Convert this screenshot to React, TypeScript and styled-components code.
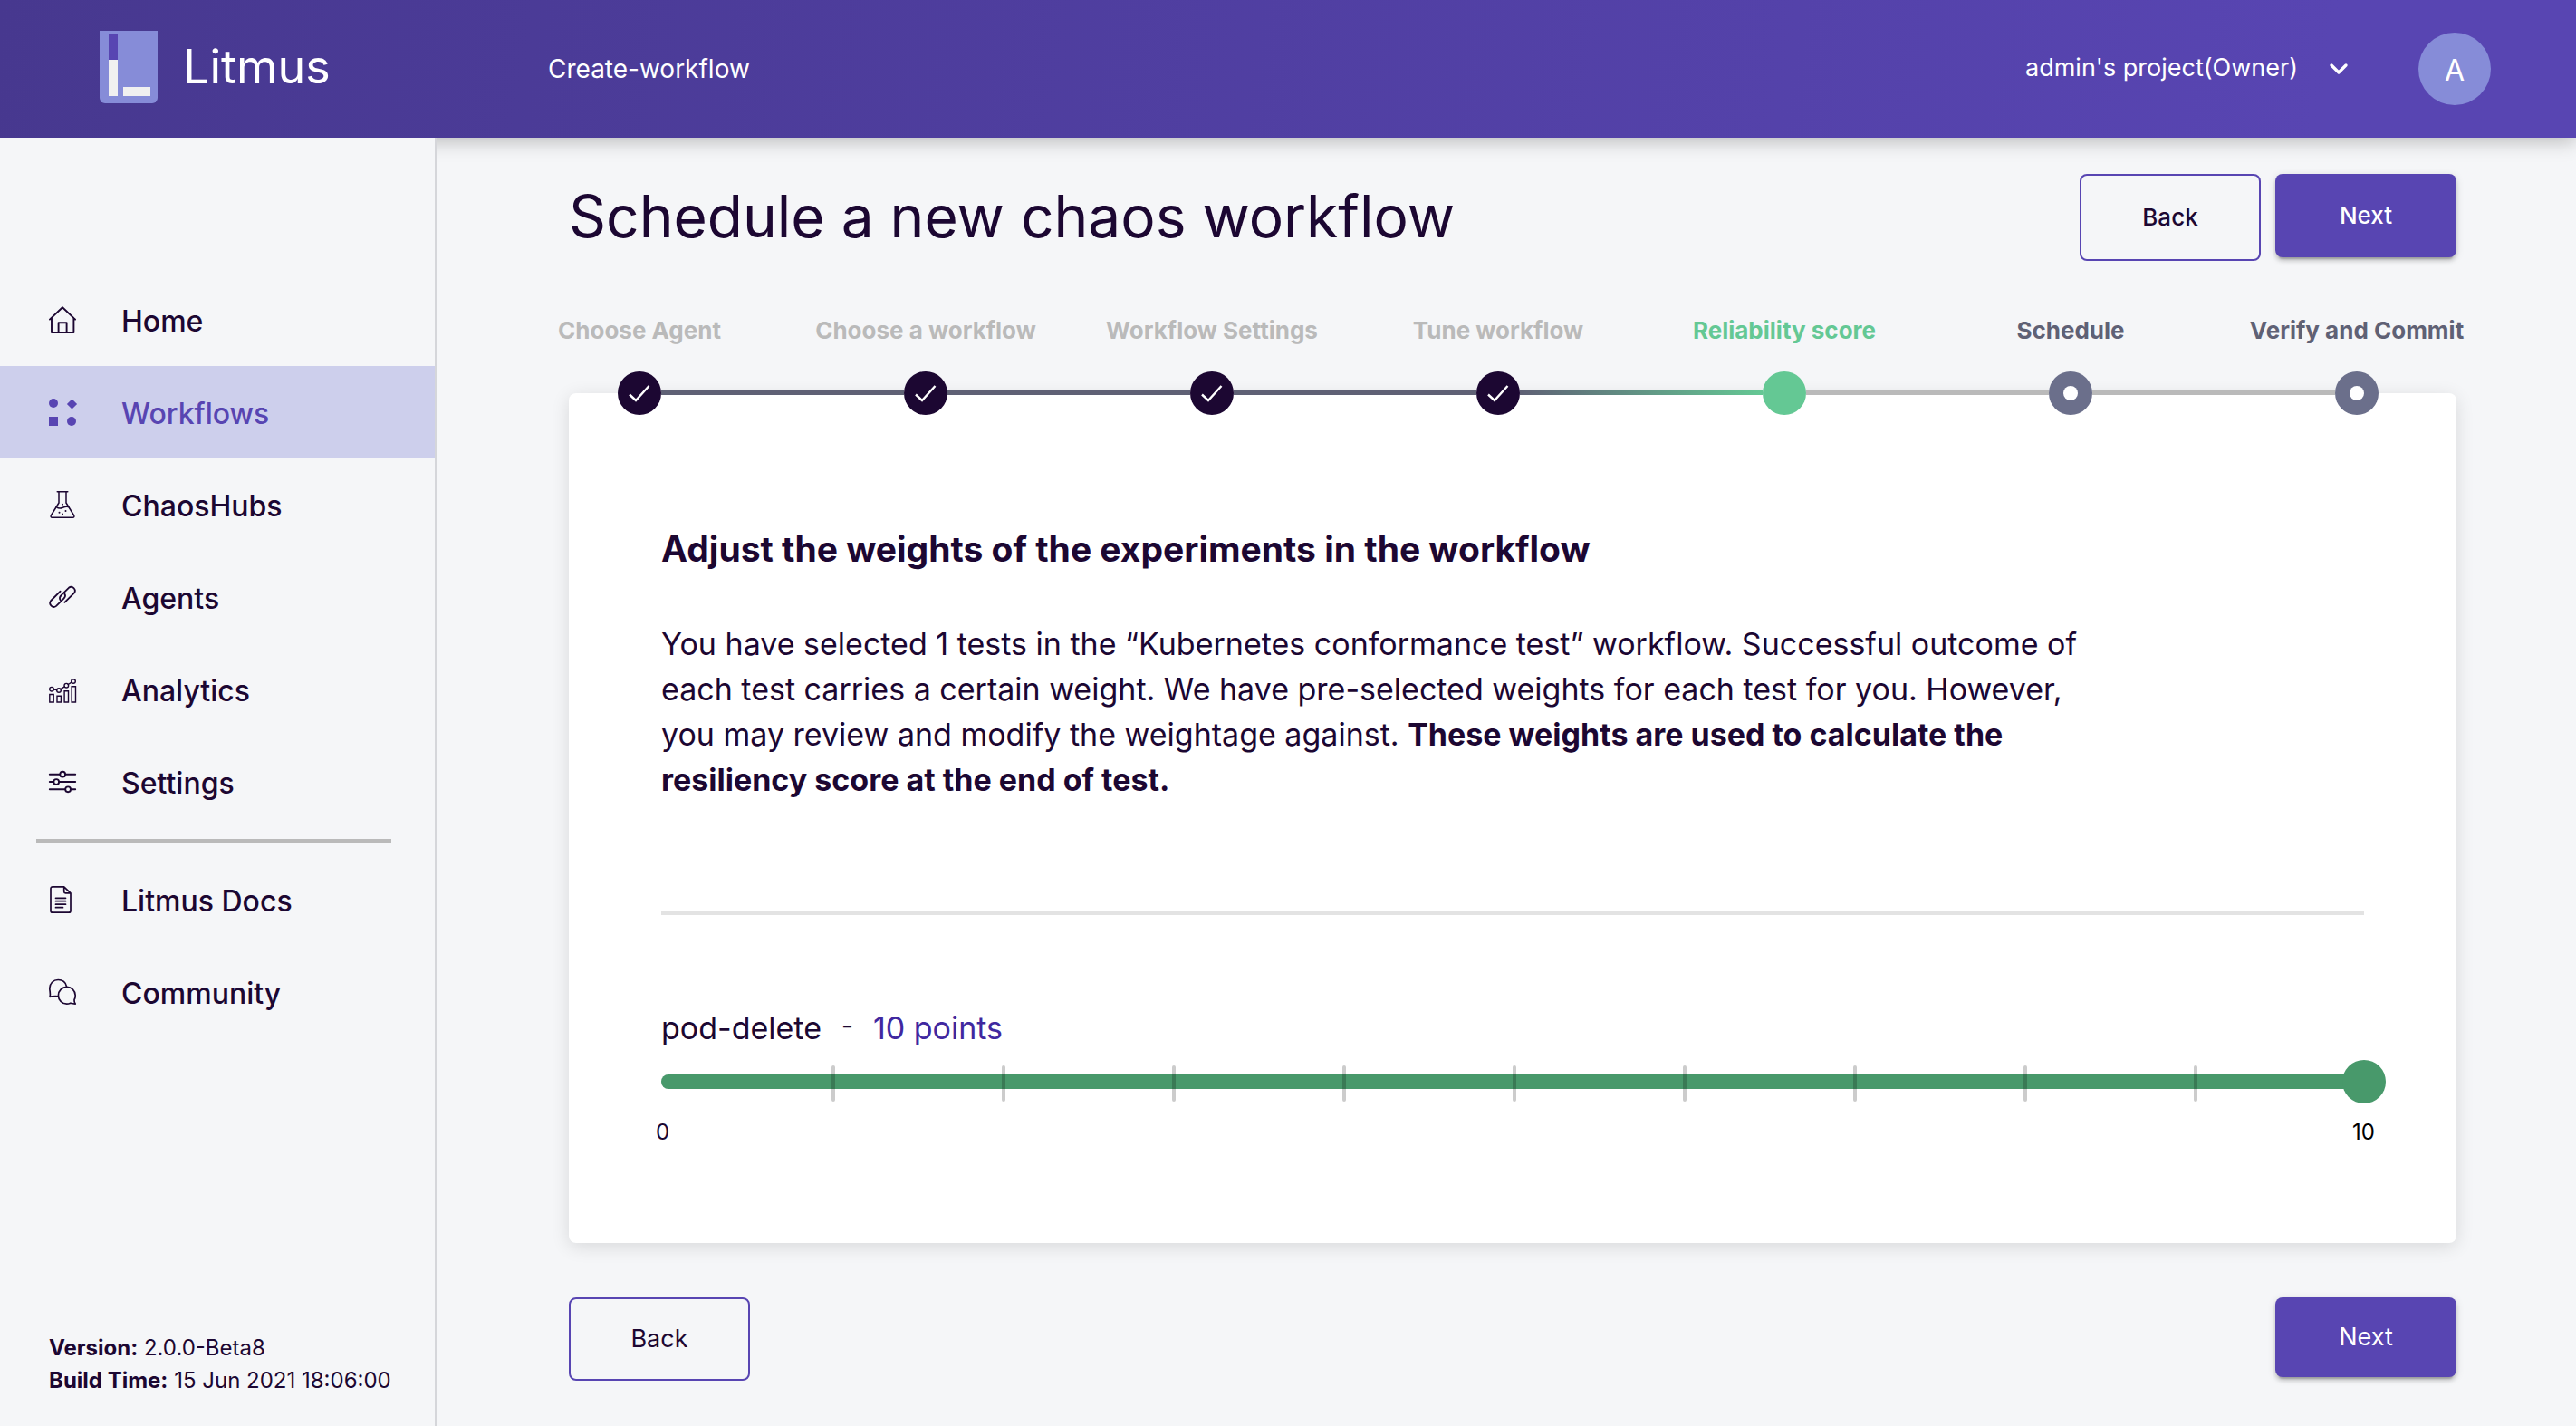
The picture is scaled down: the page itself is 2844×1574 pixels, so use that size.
import React, { useState } from 'react';
import styled, { createGlobalStyle } from 'styled-components';

const color = {
  ink: '#1c0732',
  primary: '#5845b2',
  lilac: '#868cd8',
  page: '#f5f6f8',
  selected: '#cdcfec',
  grey: '#bababa',
  slate: '#5f6175',
  pending: '#6b6f8b',
  active: '#64c894',
  green: '#48996b',
};

const GlobalStyle = createGlobalStyle`
  *, *::before, *::after { box-sizing: border-box; }
  body {
    margin: 0;
    background: ${color.page};
    color: ${color.ink};
    font-family: Inter, "Liberation Sans", sans-serif;
    -webkit-font-smoothing: antialiased;
  }
  button, select, input { font: inherit; }
`;

const Page = styled.div`
  display: flex;
  flex-direction: column;
  min-height: 100vh;
`;

const Header = styled.header`
  display: flex;
  align-items: center;
  height: 152px;
  padding: 0 94px 0 110px;
  color: #fff;
  font-size: 28px;
  background: linear-gradient(100deg, #47388f 0%, #5845b2 90%);
  box-shadow: 0 4px 20px rgba(0, 0, 0, 0.25);
`;

const Brand = styled.a`
  display: flex;
  align-items: center;
  gap: 28px;
  width: 495px;
  padding-bottom: 4px;
  color: inherit;
  font-size: 52px;
  line-height: 80px;
  text-decoration: none;
`;

const ProjectPicker = styled.label`
  display: flex;
  align-items: center;
  gap: 32px;
  margin-left: auto;
  font-size: 27px;
`;

const ProjectSelect = styled.select`
  appearance: none;
  padding: 0 0 2px;
  border: 0;
  background: none;
  color: inherit;
  line-height: 36px;
`;

const Avatar = styled.button`
  width: 80px;
  height: 80px;
  margin-left: 76px;
  padding: 2px 0 0;
  border: 0;
  border-radius: 50%;
  background: ${color.lilac};
  color: #fff;
  font-size: 32px;
`;

const Body = styled.div`
  display: flex;
  flex: 1;
`;

const Sidebar = styled.aside`
  position: relative;
  display: flex;
  flex-direction: column;
  flex: none;
  width: 482px;
  padding: 150px 0 32px;
  border-right: 2px solid #d5d6da;
  background: ${color.page};
`;

const NavLink = styled.a<{ $selected?: boolean }>`
  display: flex;
  align-items: center;
  gap: 50px;
  height: 102px;
  padding-left: 54px;
  background: ${(p) => (p.$selected ? color.selected : 'transparent')};
  color: ${(p) => (p.$selected ? color.primary : color.ink)};
  font-size: 32px;
  font-weight: 500;
  text-decoration: none;
`;

const NavText = styled.span`
  padding-top: 3px;
`;

const NavDivider = styled.hr`
  height: 4px;
  margin: 12px 48px 12px 40px;
  border: 0;
  background: ${color.grey};
`;

const BuildInfo = styled.footer`
  margin-top: auto;
  padding-left: 54px;
  font-size: 24px;
  line-height: 36px;
`;

const Main = styled.main`
  flex: 1;
  min-width: 0;
  padding: 40px 132px 48px 146px;
`;

const TitleRow = styled.div`
  display: flex;
  align-items: flex-start;
  justify-content: space-between;
`;

const Title = styled.h1`
  margin: 0;
  font-size: 64px;
  font-weight: 400;
  line-height: 94px;
`;

const Actions = styled.div<{ $spread?: boolean }>`
  display: flex;
  align-items: flex-start;
  justify-content: space-between;
  gap: 16px;
  margin-top: ${(p) => (p.$spread ? 60 : 0)}px;
  font-size: ${(p) => (p.$spread ? 27 : 26)}px;
  font-weight: ${(p) => (p.$spread ? 400 : 500)};
  line-height: ${(p) => (p.$spread ? 40 : 44)}px;
`;

const Button = styled.button<{ $filled?: boolean }>`
  width: 200px;
  padding: 24px 0;
  border: ${(p) => (p.$filled ? '0' : `2px solid ${color.primary}`)};
  border-radius: 8px;
  background: ${(p) => (p.$filled ? color.primary : 'transparent')};
  color: ${(p) => (p.$filled ? '#fff' : color.ink)};
  box-shadow: ${(p) =>
    p.$filled
      ? '0 6px 2px -4px rgba(0,0,0,.2), 0 4px 4px rgba(0,0,0,.14), 0 2px 10px rgba(0,0,0,.12)'
      : 'none'};
`;

type StepState = 'done' | 'active' | 'pending';

const Stepper = styled.ol`
  position: relative;
  z-index: 1;
  display: grid;
  grid-template-columns: repeat(7, 1fr);
  margin: 60px -48px 0 -80px;
  padding: 0;
  list-style: none;
`;

const stepInk = { done: color.grey, active: color.active, pending: color.slate };
const stepFill = { done: color.ink, active: color.active, pending: color.pending };
const stepLine = {
  done: color.slate,
  active: `linear-gradient(90deg, ${color.slate}, ${color.active})`,
  pending: color.grey,
};

const Step = styled.li<{ $state: StepState }>`
  position: relative;
  display: flex;
  flex-direction: column;
  align-items: center;
  gap: 28px;
  color: ${(p) => stepInk[p.$state]};
  font-size: 26px;
  font-weight: 700;
  line-height: 34px;
  white-space: nowrap;

  &:not(:first-child)::before {
    content: '';
    position: absolute;
    bottom: 22px;
    right: calc(50% + 24px);
    width: calc(100% - 48px);
    height: 6px;
    background: ${(p) => stepLine[p.$state]};
  }
`;

const StepDot = styled.span<{ $state: StepState }>`
  display: flex;
  align-items: center;
  justify-content: center;
  width: 48px;
  height: 48px;
  border-radius: 50%;
  background: ${(p) => stepFill[p.$state]};
`;

const PendingCore = styled.span`
  width: 16px;
  height: 16px;
  border-radius: 50%;
  background: #fff;
`;

const Card = styled.section`
  margin-top: -24px;
  padding: 148px 102px 104px;
  border-radius: 8px;
  background: #fff;
  box-shadow: 0 4px 20px rgba(0, 0, 0, 0.12);
`;

const CardTitle = styled.h2`
  margin: 0;
  font-size: 39px;
  font-weight: 700;
  line-height: 48px;
`;

const Description = styled.p`
  max-width: 1580px;
  margin: 56px 0 120px;
  font-size: 34px;
  line-height: 50px;
`;

const CardDivider = styled.hr`
  height: 4px;
  margin: 0 0 98px;
  border: 0;
  background: #e3e3e3;
`;

const WeightLabel = styled.label`
  display: flex;
  gap: 22px;
  font-size: 34px;
  line-height: 54px;
`;

const Dash = styled.span`
  font-size: 28px;
  line-height: 48px;
`;

const Points = styled.span`
  color: #4028a0;
`;

const SliderBox = styled.div`
  position: relative;
  height: 48px;
  margin-top: 8px;
`;

const SliderTrack = styled.div`
  position: absolute;
  inset: 16px 0;
  border-radius: 8px;
  background: #d9dadd;
`;

const SliderFill = styled.div`
  height: 100%;
  border-radius: 8px;
  background: ${color.green};
`;

const SliderMark = styled.span`
  position: absolute;
  top: 6px;
  width: 4px;
  height: 40px;
  border-radius: 2px;
  background: rgba(0, 0, 0, 0.2);
`;

const SliderInput = styled.input`
  position: absolute;
  top: 0;
  left: -24px;
  width: calc(100% + 48px);
  height: 48px;
  margin: 0;
  appearance: none;
  background: none;

  &::-webkit-slider-thumb {
    appearance: none;
    width: 48px;
    height: 48px;
    border: 0;
    border-radius: 50%;
    background: ${color.green};
  }
`;

const Scale = styled.div`
  display: flex;
  justify-content: space-between;
  margin: 14px -12px 0 -6px;
  font-size: 24px;
  line-height: 36px;
`;

const ScaleEnd = styled.span`
  color: #000;
`;

const Logo = () => (
  <svg width="64" height="80" viewBox="0 0 64 80" aria-hidden="true">
    <path d="M0 0H64V74a6 6 0 0 1-6 6H6a6 6 0 0 1-6-6Z" fill={color.lilac} />
    <path d="M10 4h10v28H10Z" fill={color.primary} />
    <path d="M10 32h10v40H10ZM26 62h30v10H26Z" fill="#f0f0f0" />
  </svg>
);

const Icon = ({ children, weight = 1.7 }: { children: React.ReactNode; weight?: number }) => (
  <svg
    width="30"
    height="30"
    viewBox="0 0 30 30"
    fill="none"
    stroke="currentColor"
    strokeWidth={weight}
    strokeLinecap="round"
    strokeLinejoin="round"
    overflow="visible"
    aria-hidden="true"
  >
    {children}
  </svg>
);

const HomeIcon = () => (
  <Icon weight={1.9}>
    <path d="M.9 14.6 15 1.2l14.1 13.4M3 13v16h24.4V13M10.6 29V18.2h9V29" />
  </Icon>
);

const WorkflowsIcon = () => (
  <svg width="30" height="30" viewBox="0 0 30 30" fill="currentColor" overflow="visible" aria-hidden="true">
    <circle cx="5" cy="5" r="5" />
    <path d="M25.5.4 31.1 6l-5.6 5.6L19.9 6ZM0 20h10v10H0Z" />
    <circle cx="25" cy="25" r="5" />
  </svg>
);

const FlaskIcon = () => (
  <Icon weight={1.5}>
    <path d="M9.2.8h11.6M11 .8V13L2.3 27c-.6 1.2 0 2.2 1.2 2.2h23c1.2 0 1.8-1 1.2-2.2L19 13V.8" />
    <path d="M8.4 17.6c2.4 2.2 4.6 1.8 7 .7 2.3-1 4.3-1.3 6.200-.8" />
    <path d="M15 14.7v.1M11.500 23.700v.1M18.500 22v.1M15 25.600v.1" strokeWidth="2" />
  </Icon>
);

const LinkIcon = () => (
  <Icon weight={1.8}>
    <path d="M12.600 8.600 2.200 19a4.200 4.200 0 0 0 5.900 5.900l8.400-8.300c1.800-1.800 1.900-3.700.8-5.300" />
    <path d="M17.400 20.900 27.800 10.700a4.200 4.200 0 0 0-5.900-5.900l-8.400 8.300c-1.800 1.800-1.900 3.700-.8 5.300" />
  </Icon>
);

const AnalyticsIcon = () => (
  <Icon weight={1.4}>
    <circle cx="3" cy="14.700" r="2.300" />
    <circle cx="11" cy="16" r="2.300" />
    <circle cx="19.300" cy="10.700" r="2.300" />
    <circle cx="27" cy="6" r="2.300" />
    <path d="m5.300 15.100 3.400.5M12.900 14.700l4.500-2.800M21.200 9.500l3.800-2.300" />
    <path d="M.8 20.500h4.400V29H.8ZM9 22.300h4.400V29H9ZM17.100 16.700h4.400V29h-4.400ZM25.100 11.700h4.400V29h-4.400Z" strokeLinejoin="miter" />
  </Icon>
);

const SettingsIcon = () => (
  <Icon weight={1.9}>
    <path d="M.8 6.700h11.400M18.300 6.700h10.900M.8 15h4.400M11.300 15h17.900M.8 23.300H18M24.200 23.300h5" />
    <circle cx="15.200" cy="6.700" r="2.900" />
    <circle cx="8.200" cy="15" r="2.900" />
    <circle cx="21.100" cy="23.300" r="2.900" />
  </Icon>
);

const DocsIcon = () => (
  <Icon>
    <path d="M16.700.8H4A2 2 0 0 0 2 2.800v24.400a2 2 0 0 0 2 2h18a2 2 0 0 0 2-2V7.900ZM16.700.8v5.500c0 1 .6 1.600 1.600 1.600H24" />
    <path d="M7.500 13.300h11M7.500 16.700h11M7.500 20.200h11M7.500 23.700h8" />
  </Icon>
);

const CommunityIcon = () => (
  <Icon>
    <path d="M19.400 8.700C18.500 4.200 14.900 1.500 10.200 1.500 4.800 1.500.8 5.700.8 10.800c0 3.800 1.400 6.500.2 9.500 2.500-.2 5.300-1.500 9.300-.4" />
    <path d="M28 23.700c.8-1.500 1.200-3 1.200-5a9.400 9.400 0 1 0-9.500 9.500c1.500 0 2.800-.4 4.200-1 1.800.6 3.500.8 5.300.9-1-1.400-1.300-2.800-1.200-4.400Z" />
  </Icon>
);

const primaryLinks = [
  { text: 'Home', icon: <HomeIcon /> },
  { text: 'Workflows', icon: <WorkflowsIcon />, selected: true },
  { text: 'ChaosHubs', icon: <FlaskIcon /> },
  { text: 'Agents', icon: <LinkIcon /> },
  { text: 'Analytics', icon: <AnalyticsIcon /> },
  { text: 'Settings', icon: <SettingsIcon /> },
];

const secondaryLinks = [
  { text: 'Litmus Docs', icon: <DocsIcon /> },
  { text: 'Community', icon: <CommunityIcon /> },
];

const steps: { text: string; state: StepState }[] = [
  { text: 'Choose Agent', state: 'done' },
  { text: 'Choose a workflow', state: 'done' },
  { text: 'Workflow Settings', state: 'done' },
  { text: 'Tune workflow', state: 'done' },
  { text: 'Reliability score', state: 'active' },
  { text: 'Schedule', state: 'pending' },
  { text: 'Verify and Commit', state: 'pending' },
];

const MAX_WEIGHT = 10;

function WeightSlider({ name }: { name: string }) {
  const [weight, setWeight] = useState(MAX_WEIGHT);
  const percent = (value: number) => `${(value / MAX_WEIGHT) * 100}%`;
  const marks = Array.from({ length: MAX_WEIGHT - 1 }, (_, i) => i + 1);

  return (
    <>
      <WeightLabel htmlFor={name}>
        <span>{name}</span>
        <Dash>-</Dash>
        <Points>{weight} points</Points>
      </WeightLabel>
      <SliderBox>
        <SliderTrack>
          <SliderFill style={{ width: percent(weight) }} />
        </SliderTrack>
        {marks.map((mark) => (
          <SliderMark key={mark} style={{ left: percent(mark) }} />
        ))}
        <SliderInput
          id={name}
          type="range"
          min={0}
          max={MAX_WEIGHT}
          value={weight}
          onChange={(e) => setWeight(Number(e.target.value))}
        />
      </SliderBox>
      <Scale>
        <span>0</span>
        <ScaleEnd>{MAX_WEIGHT}</ScaleEnd>
      </Scale>
    </>
  );
}

export default function App() {
  return (
    <Page>
      <GlobalStyle />
      <Header>
        <Brand href="#">
          <Logo />
          Litmus
        </Brand>
        <span>Create-workflow</span>
        <ProjectPicker>
          <ProjectSelect aria-label="Project">
            <option>admin's project(Owner)</option>
          </ProjectSelect>
          <svg width="24" height="14" viewBox="0 0 24 14" fill="none" aria-hidden="true">
            <path d="m4 3 8 8 8-8" stroke="#fff" strokeWidth="3.4" strokeLinecap="round" strokeLinejoin="round" />
          </svg>
        </ProjectPicker>
        <Avatar type="button">A</Avatar>
      </Header>
      <Body>
        <Sidebar>
          <nav>
            {primaryLinks.map((link) => (
              <NavLink key={link.text} href="#" $selected={link.selected}>
                {link.icon}
                <NavText>{link.text}</NavText>
              </NavLink>
            ))}
            <NavDivider />
            {secondaryLinks.map((link) => (
              <NavLink key={link.text} href="#">
                {link.icon}
                <NavText>{link.text}</NavText>
              </NavLink>
            ))}
          </nav>
          <BuildInfo>
            <div>
              <b>Version:</b> 2.0.0-Beta8
            </div>
            <div>
              <b>Build Time:</b> 15 Jun 2021 18:06:00
            </div>
          </BuildInfo>
        </Sidebar>
        <Main>
          <TitleRow>
            <Title>Schedule a new chaos workflow</Title>
            <Actions>
              <Button type="button">Back</Button>
              <Button type="button" $filled>
                Next
              </Button>
            </Actions>
          </TitleRow>
          <Stepper>
            {steps.map(({ text, state }) => (
              <Step key={text} $state={state}>
                {text}
                <StepDot $state={state}>
                  {state === 'done' && (
                    <svg width="24" height="20" viewBox="0 0 24 20" fill="none" aria-hidden="true">
                      <path d="m1 11.5 7 6.5L22.5 2" stroke="#fff" strokeWidth="2.4" />
                    </svg>
                  )}
                  {state === 'pending' && <PendingCore />}
                </StepDot>
              </Step>
            ))}
          </Stepper>
          <Card>
            <CardTitle>Adjust the weights of the experiments in the workflow</CardTitle>
            <Description>
              You have selected 1 tests in the “Kubernetes conformance test” workflow. Successful
              outcome of each test carries a certain weight. We have pre-selected weights for each
              test for you. However, you may review and modify the weightage against.{' '}
              <b>
                These weights are used to calculate the resiliency score at the end of test.
              </b>
            </Description>
            <CardDivider />
            <WeightSlider name="pod-delete" />
          </Card>
          <Actions $spread>
            <Button type="button">Back</Button>
            <Button type="button" $filled>
              Next
            </Button>
          </Actions>
        </Main>
      </Body>
    </Page>
  );
}
